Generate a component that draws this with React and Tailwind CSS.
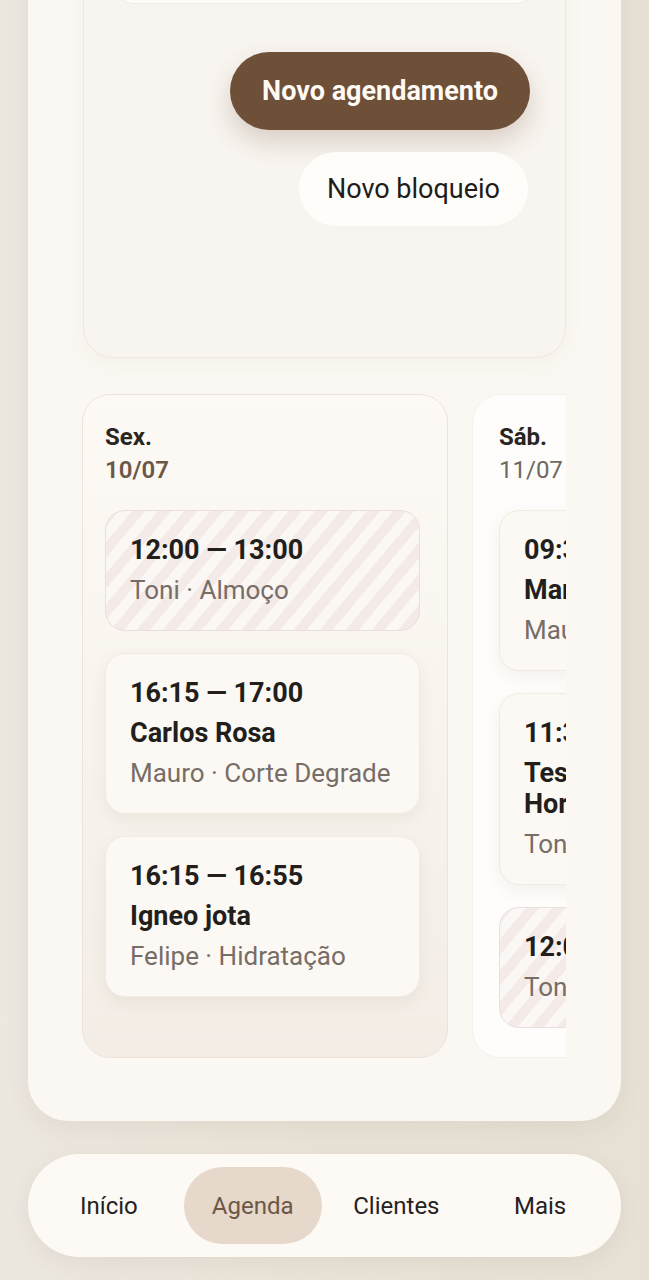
import React from 'react';

const days = [
  {
    label: 'Sex.',
    date: '10/07',
    active: true,
    items: [
      { blocked: true, time: '12:00 — 13:00', sub: 'Toni · Almoço' },
      { time: '16:15 — 17:00', name: 'Carlos Rosa', sub: 'Mauro · Corte Degrade' },
      { time: '16:15 — 16:55', name: 'Igneo jota', sub: 'Felipe · Hidratação' },
    ],
  },
  {
    label: 'Sáb.',
    date: '11/07',
    items: [
      { time: '09:30 — 10:15', name: 'Marcos Lima', sub: 'Mauro · Corte' },
      { time: '11:30 — 12:00', name: 'Teste Cliente Novo Horário', sub: 'Toni · Barba' },
      { blocked: true, time: '12:00 — 13:00', sub: 'Toni · Almoço' },
    ],
  },
];

const tabs = ['Início', 'Agenda', 'Clientes', 'Mais'];

function Slot({ item }) {
  return (
    <div
      className={`rounded-[20px] border px-[24px] py-[24px] ${
        item.blocked
          ? 'border-[#eadfdb] bg-[repeating-linear-gradient(130deg,#f4eae7_0px,#f4eae7_10px,#fbf7f4_10px,#fbf7f4_20px)]'
          : 'border-[#f1ebe4] bg-[#fcf9f4] shadow-[0_6px_16px_rgba(120,96,70,0.08)]'
      }`}
    >
      <div className="flex flex-col gap-[9px] leading-[31px]">
        <div className="text-[27px] font-bold text-[#221e1b] whitespace-nowrap">{item.time}</div>
        {item.name && <div className="text-[27px] font-bold text-[#221e1b]">{item.name}</div>}
        <div className="text-[26px] text-[#776d67] whitespace-nowrap">{item.sub}</div>
      </div>
    </div>
  );
}

function DayColumn({ day }) {
  return (
    <div
      className={`w-[366px] shrink-0 rounded-[28px] border pt-[26px] ${
        day.active
          ? 'border-[#ece4db] bg-gradient-to-b from-[#fdfaf5] to-[#f3ede6] pl-[22px] pr-[27px] pb-[60px]'
          : 'border-[#f4f0ea] bg-[#fefdfb] pl-[26px] pr-[23px] pb-[20px]'
      }`}
    >
      <div className="text-[24px] leading-[33px]">
        <div className="font-bold text-[#2a2521]">{day.label}</div>
        <div className={day.active ? 'font-semibold text-[#6c5747]' : 'text-[#6e6863]'}>{day.date}</div>
      </div>
      <div className="mt-[23px] flex flex-col gap-[22px]">
        {day.items.map((item, i) => (
          <Slot key={i} item={item} />
        ))}
      </div>
    </div>
  );
}

export default function App() {
  return (
    <div className="h-[1280px] overflow-hidden bg-gradient-to-r from-[#ece7df] via-[#e9e2d7] to-[#e7e0d5] px-[28px] font-['Roboto',sans-serif]">
      {/* main panel, scrolled so its top is out of view */}
      <div className="-mt-[95px] rounded-b-[40px] bg-[#fbf8f3] px-[55px] pt-[24px] pb-[55px] shadow-[0_8px_24px_rgba(110,90,60,0.08)]">
        <div className="rounded-[30px] border border-[#eee8e0] bg-[#f8f4ef] px-[26px] pt-[24px] pb-[131px] shadow-[0_6px_20px_rgba(110,90,60,0.05)]">
          <div className="h-[50px] rounded-[26px] border border-[#f0ebe4] bg-[#fffdfa]"></div>
          <div className="mt-[48px] flex flex-col items-end gap-[22px] pr-[9px]">
            <button className="h-[78px] rounded-full bg-[#6e4f38] px-[32px] text-[27px] font-bold text-[#fffaf4] shadow-[0_12px_24px_rgba(110,79,56,0.22)]">
              Novo agendamento
            </button>
            <button className="mr-[2px] h-[74px] rounded-full bg-[#fffdf9] px-[28px] text-[27px] text-[#201c19]">
              Novo bloqueio
            </button>
          </div>
        </div>

        <div className="mt-[36px] -ml-[1px] overflow-hidden pb-[8px]">
          <div className="flex items-stretch gap-[24px]">
            {days.map((day) => (
              <DayColumn key={day.date} day={day} />
            ))}
          </div>
        </div>
      </div>

      {/* bottom navigation */}
      <nav className="mt-[33px] grid h-[103px] grid-cols-4 items-center gap-[6px] rounded-full bg-[#fdfaf6] px-[12px] shadow-[0_6px_20px_rgba(110,90,60,0.08)]">
        {tabs.map((tab) => (
          <div
            key={tab}
            className={`flex h-[77px] items-center justify-center rounded-full text-[24px] ${
              tab === 'Agenda' ? 'bg-[#e6d8ca] text-[#6c5747]' : 'text-[#25211e]'
            }`}
          >
            {tab}
          </div>
        ))}
      </nav>
    </div>
  );
}
